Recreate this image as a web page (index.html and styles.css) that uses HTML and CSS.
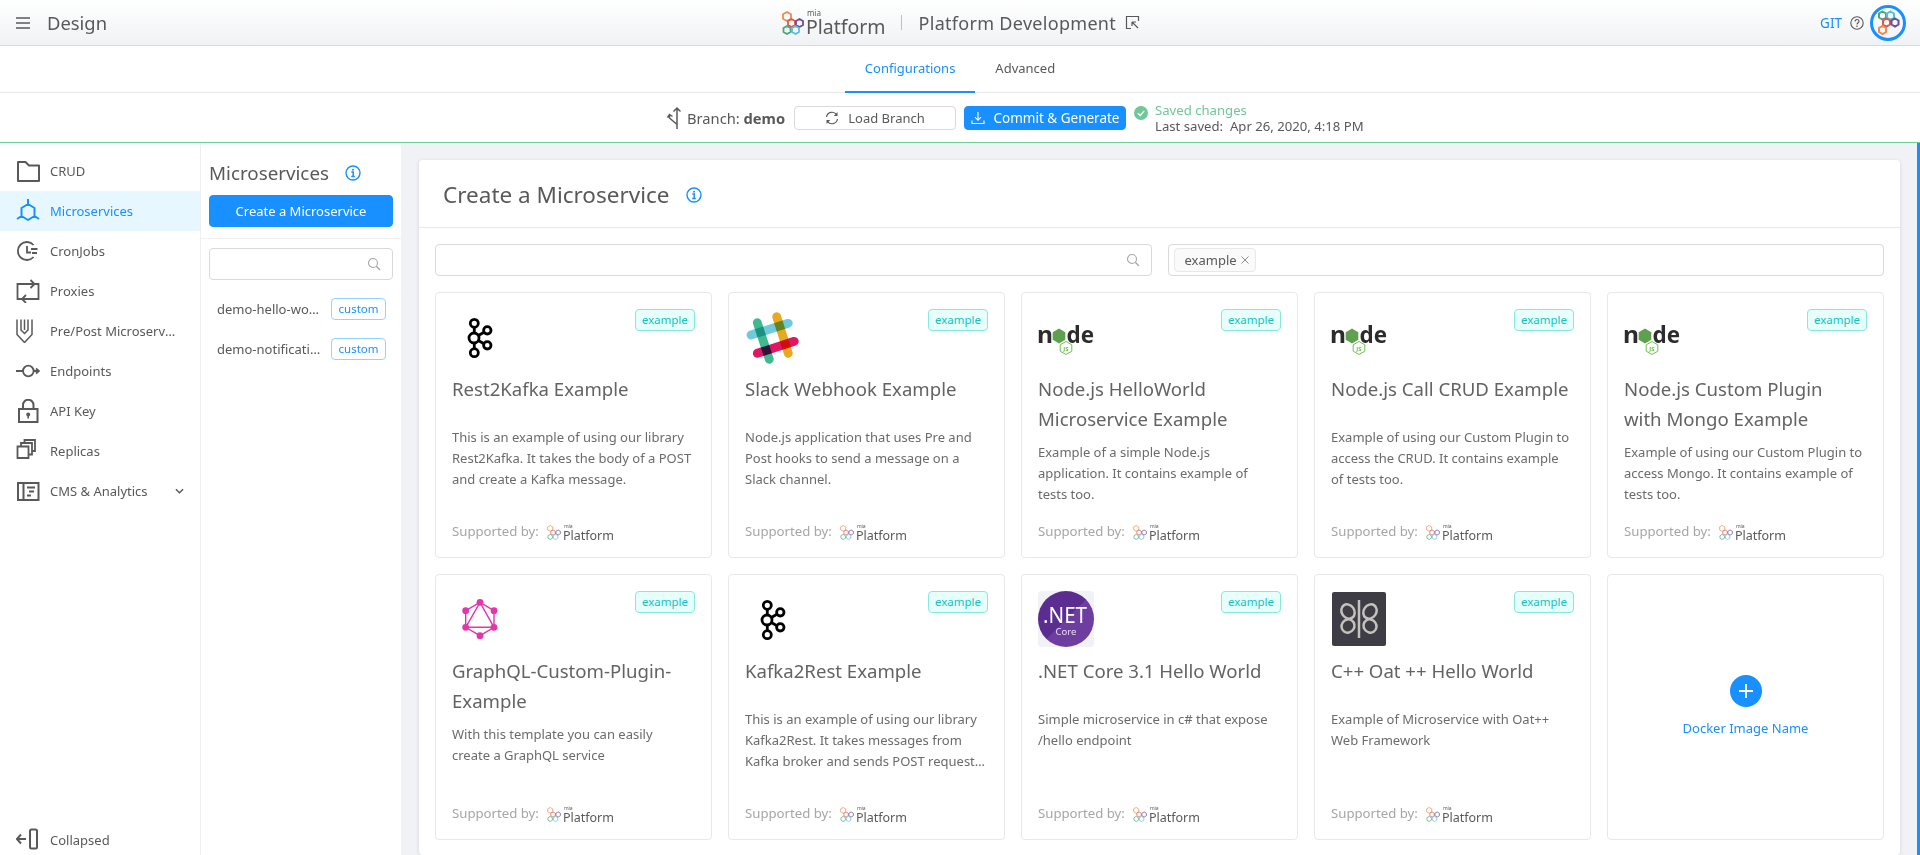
FILE: index.html
```html
<!DOCTYPE html>
<html lang="en">
<head>
<meta charset="utf-8">
<title>Design</title>
<link rel="stylesheet" href="styles.css">
</head>
<body>
<svg class="defs" width="0" height="0" aria-hidden="true">
  <symbol id="hexes" viewBox="0 0 22 24">
    <g fill="none">
      <path stroke="#ee8a4f" d="M5 1 9 3.200V7.800L5 10 1 7.800V3.200Z"/>
      <path stroke="#e2574c" d="M9.500 8 13 10V14L9.500 16 6 14V10Z"/>
      <path stroke="#6a4c9c" d="M17.500 8 21 10V14L17.500 16 14 14V10Z"/>
      <path stroke="#4ca67c" d="M5 15 8.500 17V21L5 23 1.500 21V17Z"/>
      <path stroke="#56bfdc" d="M13.500 15 17 17V21L13.500 23 10 21V17Z"/>
    </g>
  </symbol>
  <symbol id="kafka" viewBox="0 0 56 56">
    <g fill="none" stroke="#000" stroke-width="2.800">
      <path d="M22.300 14v30M22 29 35 21.500M22 29 35 36.500"/>
      <circle cx="22.300" cy="14.300" r="4" fill="#fff"/>
      <circle cx="22" cy="29" r="5" fill="#fff"/>
      <circle cx="22.300" cy="43.700" r="4" fill="#fff"/>
      <circle cx="35.300" cy="21.300" r="3.700" fill="#fff"/>
      <circle cx="35.300" cy="36.300" r="3.700" fill="#fff"/>
    </g>
  </symbol>
  <symbol id="node-art" viewBox="0 0 56 56">
    <path fill="#5fa04e" d="M21 19.500 27.300 23.200V30.800L21 34.500 14.700 30.800V23.200Z"/>
    <path fill="none" stroke="#6cc24a" stroke-width="1" d="M28 32.500 33.800 35.800V42.200L28 45.500 22.200 42.200V35.800Z"/>
  </symbol>
  <symbol id="info" viewBox="0 0 16 16">
    <circle cx="8" cy="8" r="7" fill="none" stroke="#1890ff" stroke-width="1.400"/>
    <circle cx="8" cy="4.800" r="1" fill="#1890ff"/>
    <path fill="none" stroke="#1890ff" stroke-width="1.500" d="M6.300 7H8.200V11.300M6.200 11.500H9.800"/>
  </symbol>
  <symbol id="search" viewBox="0 0 14 14">
    <circle cx="6" cy="6" r="4.500" fill="none" stroke="#a6a6a6" stroke-width="1.100"/>
    <path stroke="#a6a6a6" stroke-width="1.300" d="M9.300 9.300 13 13"/>
  </symbol>
</svg>

<header class="topbar">
  <div class="topbar-left">
    <svg class="burger" viewBox="0 0 14 12"><path stroke="#595959" stroke-width="1.300" d="M0 1H14M0 6H14M0 11H14"/></svg>
    <span class="section-name">Design</span>
  </div>
  <div class="topbar-center">
    <div class="logo-big">
      <svg class="logo-big-mark"><use href="#hexes"/></svg>
      <div class="logo-big-text"><span class="logo-mia">mia</span><span class="logo-platform">Platform</span></div>
    </div>
    <span class="topbar-sep"></span>
    <span class="project-name">Platform Development</span>
    <svg class="open-icon" viewBox="0 0 15 15"><path fill="none" stroke="#595959" stroke-width="1.200" d="M6 13.500H1.500V1.500H13.500V6M7 7 13 13M7 7V11M7 7H11"/></svg>
  </div>
  <div class="topbar-right">
    <span class="git">GIT</span>
    <svg class="help" viewBox="0 0 14 14"><circle cx="7" cy="7" r="6.200" fill="none" stroke="#595959" stroke-width="1.100"/><path fill="none" stroke="#595959" stroke-width="1.100" d="M5 5.500C5 2.800 9 2.800 9 5.300 9 6.800 7 6.800 7 8.500"/><circle cx="7" cy="10.300" r=".8" fill="#595959"/></svg>
    <span class="avatar">
      <svg viewBox="3 3 30 30">
        <g fill="none" stroke-width="2">
          <path stroke="#4ca67c" d="M12.500 6.500 16 8.500V12.500L12.500 14.500 9 12.500V8.500Z"/>
          <path stroke="#56bfdc" d="M20.500 6.500 24 8.500V12.500L20.500 14.500 17 12.500V8.500Z"/>
          <path stroke="#e2574c" d="M16.500 13.500 20 15.500V19.500L16.500 21.500 13 19.500V15.500Z"/>
          <path stroke="#6a4c9c" d="M25 13.500 28.500 15.500V19.500L25 21.500 21.500 19.500V15.500Z"/>
          <path stroke="#ee8a4f" d="M12.500 21 16 23V27L12.500 29 9 27V23Z"/>
        </g>
      </svg>
    </span>
  </div>
</header>

<nav class="tabs">
  <a class="tab tab-active">Configurations</a>
  <a class="tab">Advanced</a>
</nav>

<section class="branchbar">
  <svg class="branch-icon" viewBox="0 0 14 24"><path fill="none" stroke="#595959" stroke-width="1.500" d="M10 23V2M6.500 5.500 10 2 13.500 5.500M10 18.500 2.500 12V9M.5 11.500 2.500 8.500 5.500 10.500"/></svg>
  <span class="branch-label">Branch: <b>demo</b></span>
  <button class="btn btn-load">
    <svg class="btn-icon" viewBox="0 0 14 14"><path fill="none" stroke="#595959" stroke-width="1.200" d="M1.500 6A5.600 5.600 0 0 1 11.500 3.500M12.500 8A5.600 5.600 0 0 1 2.500 10.500"/><path fill="#595959" d="M12.500 1V5H8.800ZM1.500 13V9H5.200Z"/></svg>
    Load Branch
  </button>
  <button class="btn btn-primary btn-commit">
    <svg class="btn-icon" viewBox="0 0 14 14"><path fill="none" stroke="#fff" stroke-width="1.100" d="M7 1V9M4 6.200 7 9.300 10 6.200M1 9.500V12.500H13V9.500"/></svg>
    Commit &amp; Generate
  </button>
  <svg class="ok-icon" viewBox="0 0 14 14"><circle cx="7" cy="7" r="7" fill="#6fc79a"/><path fill="none" stroke="#fff" stroke-width="1.400" d="M3.800 7.200 6.200 9.500 10.200 4.900"/></svg>
  <div class="save-status">
    <span class="saved">Saved changes</span>
    <span class="last">Last saved:&nbsp; Apr 26, 2020, 4:18 PM</span>
  </div>
</section>

<main class="workspace">
  <aside class="sidebar">
    <ul class="menu">
      <li class="menu-item">
        <svg class="menu-icon" viewBox="0 0 24 24"><path fill="none" stroke="#595959" stroke-width="2" stroke-linejoin="round" d="M2 3H9.500L13 6.500H23V22H2Z"/></svg>CRUD
      </li>
      <li class="menu-item menu-active">
        <svg class="menu-icon" viewBox="0 0 24 24"><path fill="none" stroke="#1890ff" stroke-width="2" stroke-linejoin="round" d="M12 0V5M12 5 18.500 9V17L12 21 5.500 17V9ZM5.500 17 1 20M18.500 17 23 20"/></svg>Microservices
      </li>
      <li class="menu-item">
        <svg class="menu-icon" viewBox="0 0 24 24"><path fill="none" stroke="#595959" stroke-width="1.800" d="M17.600 6A9 9 0 1 0 17.600 18M11 7V13.500H15M15 10H21.500M16 14H21"/></svg>CronJobs
      </li>
      <li class="menu-item">
        <svg class="menu-icon" viewBox="0 0 24 24"><path fill="none" stroke="#595959" stroke-width="1.800" d="M6 20H1.500V5H18M14.500 1 18.500 5 14.500 9M18 5H22.500V20H7M10 16 6 20 10 24"/></svg>Proxies
      </li>
      <li class="menu-item">
        <svg class="menu-icon" viewBox="0 0 24 24"><path fill="none" stroke="#595959" stroke-width="1.500" d="M1 .5V15.500L8.500 23.500 16 15.500V.5M5 .5V11L8.500 14.500 12 11V.5M8.500 .5V11"/></svg><span class="ellipsis">Pre/Post Microservices</span>
      </li>
      <li class="menu-item">
        <svg class="menu-icon" viewBox="0 0 24 24"><path fill="none" stroke="#595959" stroke-width="1.800" d="M0 12H7M18 12H23M20 9.500 23 12 20 14.500"/><circle cx="12.300" cy="12" r="5.300" fill="none" stroke="#595959" stroke-width="1.800"/></svg>Endpoints
      </li>
      <li class="menu-item">
        <svg class="menu-icon" viewBox="0 0 24 24"><rect x="3" y="10" width="18.500" height="13" fill="none" stroke="#595959" stroke-width="2"/><path fill="none" stroke="#595959" stroke-width="2" d="M7 10V6A5 5 0 0 1 17.500 6V10"/><circle cx="12.200" cy="15.500" r="2" fill="#595959"/><path stroke="#595959" stroke-width="1.600" d="M12.200 15V19.500"/></svg>API Key
      </li>
      <li class="menu-item">
        <svg class="menu-icon" viewBox="0 0 24 24"><path fill="none" stroke="#595959" stroke-width="1.800" d="M1.500 7.500H12.500V19H1.500ZM5 7.500V4H16V15.500H12.500M8.500 4V1H19V12H16"/></svg>Replicas
      </li>
      <li class="menu-item">
        <svg class="menu-icon" viewBox="0 0 24 24"><path fill="none" stroke="#595959" stroke-width="2" d="M2 4H22.500V21H2ZM7.500 4V21M11 8.500H19M13 12.500H18M11 16.500H15"/></svg>CMS &amp; Analytics
        <svg class="caret" viewBox="0 0 10 6"><path fill="none" stroke="#595959" stroke-width="1.600" d="M1 1 5 5 9 1"/></svg>
      </li>
    </ul>
    <div class="menu-item collapse-item">
      <svg class="menu-icon" viewBox="0 0 24 24"><path fill="none" stroke="#595959" stroke-width="2" d="M1 11H10M5 6.500 .8 11 5 15.500"/><rect x="14" y="1.500" width="7" height="19" rx="1.500" fill="none" stroke="#595959" stroke-width="2"/></svg>Collapsed
    </div>
  </aside>

  <aside class="services">
    <div class="services-head">
      <div class="services-title">Microservices <svg class="info"><use href="#info"/></svg></div>
      <button class="btn btn-primary btn-create">Create a Microservice</button>
    </div>
    <div class="services-body">
      <div class="input input-side"><svg class="search-icon"><use href="#search"/></svg></div>
      <div class="service-row"><span class="service-name">demo-hello-world</span><span class="tag-custom">custom</span></div>
      <div class="service-row"><span class="service-name">demo-notification</span><span class="tag-custom">custom</span></div>
    </div>
  </aside>

  <section class="content">
    <div class="panel">
      <h1 class="panel-title">Create a Microservice <svg class="info"><use href="#info"/></svg></h1>
      <div class="panel-body">
        <div class="filters">
          <div class="input"><svg class="search-icon"><use href="#search"/></svg></div>
          <div class="input input-tags"><span class="chip">example <svg class="chip-x" viewBox="0 0 8 8"><path stroke="#8c8c8c" d="M.5 .5 7.500 7.500M7.500 .5 .5 7.500"/></svg></span></div>
        </div>
        <div class="grid">

          <article class="card">
            <span class="badge">example</span>
            <svg class="card-img"><use href="#kafka"/></svg>
            <h2 class="card-title">Rest2Kafka Example</h2>
            <p class="card-desc">This is an example of using our library Rest2Kafka. It takes the body of a POST and create a Kafka message.</p>
            <div class="supported">Supported by: <span class="mini-logo"><svg class="mini-mark"><use href="#hexes"/></svg><span class="mini-text"><span class="mini-mia">mia</span><span class="mini-platform">Platform</span></span></span></div>
          </article>

          <article class="card">
            <span class="badge">example</span>
            <svg class="card-img slack" viewBox="0 0 56 56">
              <g fill="none" stroke-width="8.800" stroke-linecap="round">
                <path stroke="#3eb991" d="M12.300 13.700 24.300 50.300"/>
                <path stroke="#e9a820" d="M31.700 7.700 43.300 44.300"/>
                <path stroke="#6ecadc" d="M6 26 43.300 14.300"/>
                <path stroke="#e01563" d="M12.300 44.300 49.300 32.300"/>
              </g>
            </svg>
            <h2 class="card-title">Slack Webhook Example</h2>
            <p class="card-desc">Node.js application that uses Pre and Post hooks to send a message on a Slack channel.</p>
            <div class="supported">Supported by: <span class="mini-logo"><svg class="mini-mark"><use href="#hexes"/></svg><span class="mini-text"><span class="mini-mia">mia</span><span class="mini-platform">Platform</span></span></span></div>
          </article>

          <article class="card">
            <span class="badge">example</span>
            <svg class="card-img" viewBox="0 0 56 56"><use href="#node-art" width="56" height="56"/><text x="-1" y="34" class="node-word" textLength="16" lengthAdjust="spacingAndGlyphs">n</text><text x="28.500" y="34" class="node-word" textLength="27.500" lengthAdjust="spacingAndGlyphs">de</text><text x="28" y="41.500" class="node-js">JS</text></svg>
            <h2 class="card-title">Node.js HelloWorld Microservice Example</h2>
            <p class="card-desc">Example of a simple Node.js application. It contains example of<br>tests too.</p>
            <div class="supported">Supported by: <span class="mini-logo"><svg class="mini-mark"><use href="#hexes"/></svg><span class="mini-text"><span class="mini-mia">mia</span><span class="mini-platform">Platform</span></span></span></div>
          </article>

          <article class="card">
            <span class="badge">example</span>
            <svg class="card-img" viewBox="0 0 56 56"><use href="#node-art" width="56" height="56"/><text x="-1" y="34" class="node-word" textLength="16" lengthAdjust="spacingAndGlyphs">n</text><text x="28.500" y="34" class="node-word" textLength="27.500" lengthAdjust="spacingAndGlyphs">de</text><text x="28" y="41.500" class="node-js">JS</text></svg>
            <h2 class="card-title">Node.js Call CRUD Example</h2>
            <p class="card-desc">Example of using our Custom Plugin to access the CRUD. It contains example of tests too.</p>
            <div class="supported">Supported by: <span class="mini-logo"><svg class="mini-mark"><use href="#hexes"/></svg><span class="mini-text"><span class="mini-mia">mia</span><span class="mini-platform">Platform</span></span></span></div>
          </article>

          <article class="card">
            <span class="badge">example</span>
            <svg class="card-img" viewBox="0 0 56 56"><use href="#node-art" width="56" height="56"/><text x="-1" y="34" class="node-word" textLength="16" lengthAdjust="spacingAndGlyphs">n</text><text x="28.500" y="34" class="node-word" textLength="27.500" lengthAdjust="spacingAndGlyphs">de</text><text x="28" y="41.500" class="node-js">JS</text></svg>
            <h2 class="card-title">Node.js Custom Plugin<br>with Mongo Example</h2>
            <p class="card-desc">Example of using our Custom Plugin to access Mongo. It contains example of tests too.</p>
            <div class="supported">Supported by: <span class="mini-logo"><svg class="mini-mark"><use href="#hexes"/></svg><span class="mini-text"><span class="mini-mia">mia</span><span class="mini-platform">Platform</span></span></span></div>
          </article>

          <article class="card">
            <span class="badge">example</span>
            <svg class="card-img" viewBox="0 0 56 56">
              <g fill="none" stroke="#e535ab" stroke-width="1.400">
                <path d="M28 11.300 42 19.700V36.300L28 44.700 13.700 36.300V19.700ZM28 11.300 42 36.300H13.700Z"/>
              </g>
              <g fill="#e535ab">
                <circle cx="28" cy="11.300" r="3.400"/><circle cx="42" cy="19.700" r="3.400"/><circle cx="42" cy="36.300" r="3.400"/>
                <circle cx="28" cy="44.700" r="3.400"/><circle cx="13.700" cy="36.300" r="3.400"/><circle cx="13.700" cy="19.700" r="3.400"/>
              </g>
            </svg>
            <h2 class="card-title">GraphQL-Custom-Plugin-Example</h2>
            <p class="card-desc">With this template you can easily<br>create a GraphQL service</p>
            <div class="supported">Supported by: <span class="mini-logo"><svg class="mini-mark"><use href="#hexes"/></svg><span class="mini-text"><span class="mini-mia">mia</span><span class="mini-platform">Platform</span></span></span></div>
          </article>

          <article class="card">
            <span class="badge">example</span>
            <svg class="card-img"><use href="#kafka"/></svg>
            <h2 class="card-title">Kafka2Rest Example</h2>
            <p class="card-desc">This is an example of using our library Kafka2Rest. It takes messages from Kafka broker and sends POST requests to a service of your choice.</p>
            <div class="supported">Supported by: <span class="mini-logo"><svg class="mini-mark"><use href="#hexes"/></svg><span class="mini-text"><span class="mini-mia">mia</span><span class="mini-platform">Platform</span></span></span></div>
          </article>

          <article class="card">
            <span class="badge">example</span>
            <svg class="card-img" viewBox="0 0 56 56">
              <defs><linearGradient id="net" x1="0" y1="0" x2="1" y2="1"><stop offset=".5" stop-color="#5c2d91"/><stop offset=".5" stop-color="#6d3d9f"/></linearGradient></defs>
              <rect width="56" height="56" rx="4" fill="#f0f2f5"/>
              <circle cx="28" cy="28" r="28" fill="url(#net)"/>
              <text x="27" y="32" class="net-main" textLength="44" lengthAdjust="spacingAndGlyphs">.NET</text>
              <text x="28" y="44" class="net-sub">Core</text>
            </svg>
            <h2 class="card-title">.NET Core 3.1 Hello World</h2>
            <p class="card-desc">Simple microservice in c# that expose /hello endpoint</p>
            <div class="supported">Supported by: <span class="mini-logo"><svg class="mini-mark"><use href="#hexes"/></svg><span class="mini-text"><span class="mini-mia">mia</span><span class="mini-platform">Platform</span></span></span></div>
          </article>

          <article class="card">
            <span class="badge">example</span>
            <svg class="card-img" viewBox="0 0 56 56">
              <rect x="1" y="1" width="54" height="54" rx="2" fill="#3e3d46"/>
              <g fill="none" stroke="#c4c2bc" stroke-width="2.500">
                <path d="M28 9V47"/>
                <ellipse cx="17" cy="20.500" rx="6.300" ry="7.500" transform="rotate(-35 17 20.500)"/>
                <ellipse cx="39" cy="20.500" rx="6.300" ry="7.500" transform="rotate(35 39 20.500)"/>
                <ellipse cx="17" cy="35" rx="6.300" ry="6.800" transform="rotate(35 17 35)"/>
                <ellipse cx="39" cy="35" rx="6.300" ry="6.800" transform="rotate(-35 39 35)"/>
              </g>
            </svg>
            <h2 class="card-title">C++ Oat ++ Hello World</h2>
            <p class="card-desc">Example of Microservice with Oat++ Web Framework</p>
            <div class="supported">Supported by: <span class="mini-logo"><svg class="mini-mark"><use href="#hexes"/></svg><span class="mini-text"><span class="mini-mia">mia</span><span class="mini-platform">Platform</span></span></span></div>
          </article>

          <article class="card card-add">
            <span class="add-circle"><svg viewBox="0 0 14 14"><path stroke="#fff" stroke-width="1.800" d="M7 0V14M0 7H14"/></svg></span>
            <span class="add-label">Docker Image Name</span>
          </article>

        </div>
      </div>
    </div>
  </section>
</main>
</body>
</html>
```
FILE: styles.css
```css
* { box-sizing: border-box; }
html, body { margin: 0; height: 855px; overflow: hidden; }
body {
  font-family: "Noto Sans", "Open Sans", sans-serif;
  font-size: 13px;
  color: #595959;
  background: #fff;
  display: flex;
  flex-direction: column;
}
.defs { position: absolute; }

/* top bar */
.topbar {
  height: 46px;
  flex: none;
  display: grid;
  grid-template-columns: 1fr auto 1fr;
  align-items: center;
  background: linear-gradient(#fff, #f0f2f5);
  border-bottom: 1px solid #d9d9d9;
  padding: 0 14px 0 16px;
}
.topbar-left { display: flex; align-items: center; gap: 17px; }
.burger { width: 14px; height: 12px; }
.section-name { font-size: 18.400px; line-height: 24px; }
.topbar-center { display: flex; align-items: center; }
.logo-big { display: flex; align-items: flex-end; gap: 2px; height: 28px; }
.logo-big-mark { width: 22px; height: 24px; margin-bottom: 2px; stroke-width: 1.800; }
.logo-big-text { display: flex; flex-direction: column; }
.logo-mia { font-size: 8px; line-height: 8px; margin-left: 1px; }
.logo-platform { font-size: 19.500px; line-height: 20px; }
.topbar-sep { width: 1px; height: 15px; background: #bfbfbf; margin: 0 17px 0 15px; }
.project-name { font-size: 18px; line-height: 24px; letter-spacing: .3px; }
.open-icon { width: 15px; height: 15px; margin-left: 9px; }
.topbar-right { display: flex; align-items: center; justify-content: flex-end; gap: 8px; }
.git { color: #1890ff; font-size: 13.500px; }
.help { width: 14px; height: 14px; margin-right: -2px; }
.avatar {
  width: 36px;
  height: 36px;
  border: 3px solid #1890ff;
  border-radius: 50%;
  display: block;
  overflow: hidden;
}
.avatar svg { width: 100%; height: 100%; display: block; }

/* tabs */
.tabs {
  height: 47px;
  flex: none;
  display: flex;
  justify-content: center;
  border-bottom: 1px solid #e8e8e8;
}
.tab { padding: 0 20px; line-height: 44px; height: 47px; }
.tab-active { color: #1890ff; border-bottom: 2px solid #1890ff; }

/* branch bar */
.branchbar {
  height: 50px;
  flex: none;
  display: flex;
  align-items: center;
  padding-left: 667px;
  border-bottom: 1px solid #6fcf97;
}
.branch-icon { width: 14px; height: 24px; margin-right: 6px; }
.branch-label { width: 107px; white-space: nowrap; font-size: 14.700px; }
.branch-label b { font-weight: 700; }
.btn {
  font-family: inherit;
  font-size: 13px;
  height: 24px;
  border-radius: 4px;
  border: 1px solid #d9d9d9;
  background: #fff;
  color: #595959;
  display: inline-flex;
  align-items: center;
  justify-content: center;
  padding: 0;
}
.btn-primary { background: #1890ff; border-color: #1890ff; color: #fff; }
.btn-icon { width: 14px; height: 14px; margin-right: 9px; }
.btn-load { width: 162px; }
.btn-commit { width: 162px; margin-left: 8px; font-size: 13.500px; }
.ok-icon { width: 14px; height: 14px; margin: -10px 7px 0 8px; }
.save-status { display: flex; flex-direction: column; line-height: 16px; font-size: 13.150px; }
.saved { color: #6fc79a; }

/* workspace */
.workspace { flex: 1; display: flex; min-height: 0; }
.sidebar {
  width: 201px;
  flex: none;
  border-right: 1px solid #f0f0f0;
  padding-top: 8px;
  display: flex;
  flex-direction: column;
  justify-content: space-between;
}
.menu { list-style: none; margin: 0; padding: 0; }
.menu-item {
  height: 40px;
  display: flex;
  align-items: center;
  padding: 0 16px;
  white-space: nowrap;
}
.menu-icon { width: 24px; height: 24px; margin-right: 10px; flex: none; }
.menu-active { background: #e6f7ff; color: #1890ff; }
.ellipsis { display: block; width: 127px; overflow: hidden; text-overflow: ellipsis; }
.caret { width: 9px; height: 6px; margin-left: auto; }
.collapse-item { margin-bottom: -5px; }

.services { width: 200px; flex: none; }
.services-head { padding: 7px 8px 11px; border-bottom: 1px solid #f0f0f0; }
.services-title { font-size: 18.800px; line-height: 40px; height: 45px; display: flex; align-items: center; }
.services-title .info { margin-left: 16px; }
.info { width: 16px; height: 16px; flex: none; }
.btn-create { width: 184px; height: 32px; }
.services-body { padding: 9px 8px 0; }

.input {
  height: 32px;
  border: 1px solid #d9d9d9;
  border-radius: 4px;
  background: #fff;
  display: flex;
  align-items: center;
  justify-content: flex-end;
  padding: 0 11px;
}
.input-side { margin-bottom: 18px; }
.search-icon { width: 14px; height: 14px; }
.service-row { height: 22px; margin-bottom: 18px; display: flex; align-items: center; justify-content: space-between; padding-left: 8px; }
.service-name { width: 106px; overflow: hidden; white-space: nowrap; text-overflow: ellipsis; }
.tag-custom {
  width: 55px;
  height: 22px;
  border: 1px solid #91d5ff;
  border-radius: 4px;
  color: #1890ff;
  font-size: 11.500px;
  line-height: 20px;
  text-align: center;
  margin-right: 7px;
}

.content {
  flex: 1;
  min-width: 0;
  background: #f0f2f5;
  border-right: 3px solid #1890ff;
  padding: 17px 17px 0 18px;
}
.panel { background: #fff; border-radius: 4px; box-shadow: 0 1px 4px rgba(0,0,0,.12); height: 100%; }
.panel-title {
  margin: 0;
  height: 68px;
  border-bottom: 1px solid #e8e8e8;
  padding: 2px 24px 0;
  display: flex;
  align-items: center;
  gap: 17px;
  font-size: 22.500px;
  font-weight: 400;
}
.panel-body { padding: 16px; }
.filters { display: grid; grid-template-columns: 1fr 1fr; gap: 16px; margin-bottom: 16px; }
.input-tags { justify-content: flex-start; padding: 0 5px; }
.chip {
  height: 24px;
  width: 82px;
  background: #fafafa;
  border: 1px solid #e8e8e8;
  border-radius: 4px;
  padding: 0 0 0 10px;
  line-height: 22px;
  display: flex;
  align-items: center;
  gap: 4px;
}
.chip-x { width: 8px; height: 8px; }

.grid {
  display: grid;
  grid-template-columns: repeat(5, 1fr);
  grid-auto-rows: 266px;
  gap: 16px;
}
.card {
  position: relative;
  border: 1px solid #e8e8e8;
  border-radius: 4px;
  padding: 16px 16px 15px;
  display: flex;
  flex-direction: column;
  align-items: flex-start;
}
.badge {
  position: absolute;
  top: 16px;
  right: 16px;
  width: 60px;
  height: 22px;
  background: #e6fffb;
  border: 1px solid #87e8de;
  border-radius: 4px;
  color: #13c2c2;
  font-size: 11.500px;
  line-height: 20px;
  text-align: center;
}
.card-img { width: 56px; height: 56px; flex: none; display: block; }
.slack g { isolation: isolate; }
.slack path { mix-blend-mode: multiply; }
.card-title {
  margin: 9px 0 8px;
  min-height: 45px;
  font-size: 18.600px;
  font-weight: 400;
  line-height: 30px;
  color: #636363;
}
.card-desc {
  margin: 0;
  line-height: 21px;
  color: #6b6b6b;
  display: -webkit-box;
  -webkit-box-orient: vertical;
  -webkit-line-clamp: 3;
  overflow: hidden;
}
.supported { margin-top: auto; color: #a6a6a6; display: flex; align-items: flex-start; gap: 8px; line-height: 21px; font-size: 13.200px; }
.mini-logo { display: flex; gap: 2px; height: 18px; margin-top: 3px; }
.mini-mark { width: 14px; height: 17px; stroke-width: 1.300; opacity: .85; }
.mini-text { display: flex; flex-direction: column; color: #595959; }
.mini-mia { font-size: 5px; line-height: 5px; margin-left: 1px; }
.mini-platform { font-size: 12.500px; line-height: 13px; }
.node-word { font-family: "Noto Sans", sans-serif; font-weight: 700; font-size: 24px; fill: #2c2c2c; }
.node-js { font-family: "Noto Sans", sans-serif; font-size: 6px; font-weight: 700; fill: #6cc24a; text-anchor: middle; }
.net-main { font-family: "Noto Sans", sans-serif; font-size: 22px; fill: #fff; text-anchor: middle; }
.net-sub { font-family: "Noto Sans", sans-serif; font-size: 9.500px; fill: #e8dff0; text-anchor: middle; }

.card-add { align-items: center; justify-content: center; padding: 0; color: #1890ff; }
.add-circle {
  width: 32px;
  height: 32px;
  border-radius: 50%;
  background: #1890ff;
  display: flex;
  align-items: center;
  justify-content: center;
  margin-bottom: 11px;
}
.add-circle svg { width: 14px; height: 14px; }
.add-label { line-height: 21px; }
```
